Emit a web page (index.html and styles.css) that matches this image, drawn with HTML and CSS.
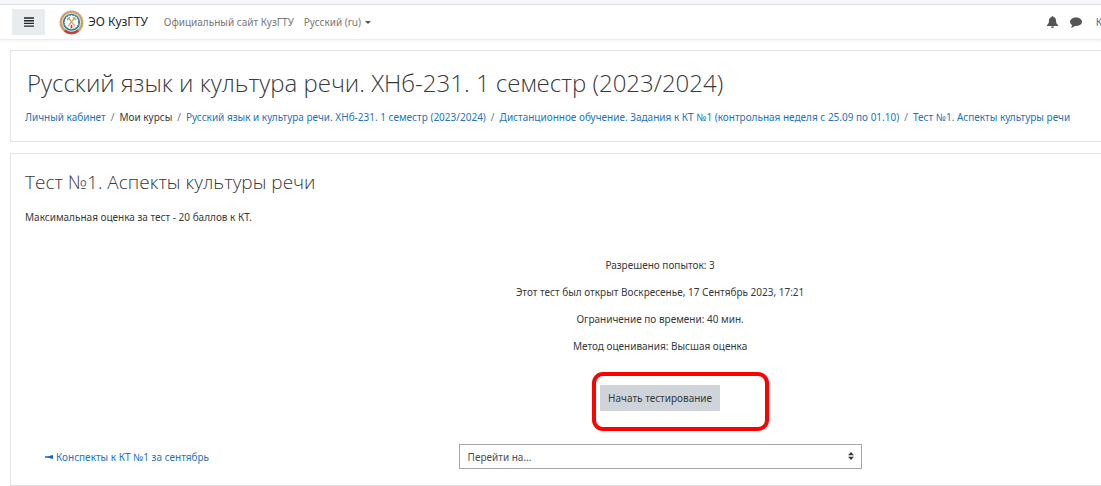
FILE: index.html
```html
<!DOCTYPE html>
<html lang="ru">
<head>
<meta charset="utf-8">
<meta name="viewport" content="width=device-width, initial-scale=1">
<title>Тест №1. Аспекты культуры речи</title>
<link rel="stylesheet" href="styles.css">
</head>
<body>
<header class="navbar">
  <button class="menu-button" type="button" aria-label="Меню">
    <svg width="10" height="10" viewBox="0 0 10 10" aria-hidden="true"><path d="M0 1h10M0 3.7h10M0 6.4h10M0 9.1h10" stroke="#212529" stroke-width="1.4"/></svg>
  </button>
  <a class="brand" href="#">
    <svg width="25" height="25" viewBox="0 0 25 25" aria-hidden="true">
      <circle cx="12.5" cy="12.5" r="12" fill="#d2ad79"/>
      <circle cx="12.5" cy="12.5" r="10.6" fill="none" stroke="#b98b5c" stroke-width="1" stroke-dasharray="1.5 1.5"/>
      <path d="M5 21.5a12 12 0 0 0 15 0l-1.5-2a10 10 0 0 1-12 0z" fill="#c63b35"/>
      <circle cx="12.5" cy="12.2" r="9.2" fill="#f6efe2"/>
      <circle cx="12.5" cy="12.2" r="7.9" fill="#fff" stroke="#267b99" stroke-width="1.3"/>
      <circle cx="12.5" cy="12.2" r="7" fill="none" stroke="#267b99" stroke-width="1" stroke-dasharray="1.4 1.4"/>
      <path d="M9 16.3l6-7.8M16 16.3L10 8.5" stroke="#d0a26c" stroke-width="1.3"/>
      <path d="M8 10l2.8-2.8M14.2 7.2L17 10" stroke="#d0a26c" stroke-width="1.8"/>
      <path d="M12.5 14.5c1.5 1.8 1.2 3.8 0 3.8s-1.5-2 0-3.8z" fill="#d5342f"/>
    </svg>
    <span>ЭО КузГТУ</span>
  </a>
  <nav class="nav-links">
    <a href="#">Официальный сайт КузГТУ</a>
    <a class="language" href="#">Русский (ru)
      <svg width="6" height="3" viewBox="0 0 6 3" aria-hidden="true"><path d="M0 0h6L3 3z" fill="#555"/></svg>
    </a>
  </nav>
  <div class="user-tools">
    <button class="icon-button" type="button" aria-label="Уведомления">
      <svg width="11" height="12" viewBox="0 0 11 12" aria-hidden="true"><path d="M5.5 0c.5 0 .8.3.8.9C8.2 1.3 9 2.7 9 4.5c0 2.3.7 3.6 2 4.5v1H0V9c1.3-.9 2-2.2 2-4.5C2 2.7 2.800 1.300 4.700.9c0-.6.3-.9.8-.9zM4 10.400h3c0 .9-.6 1.500-1.500 1.500S4 11.300 4 10.400z" fill="#555"/></svg>
    </button>
    <button class="icon-button" type="button" aria-label="Сообщения">
      <svg width="12" height="11" viewBox="0 0 12 11" aria-hidden="true"><path d="M6 .5c3.300 0 6 1.900 6 4.300S9.300 9 6 9c-.5 0-.9 0-1.300-.1C3.600 9.900 2.400 10.500.9 10.600c.7-.7 1.200-1.500 1.300-2.500C.8 7.300 0 6.100 0 4.800 0 2.400 2.700.5 6 .5z" fill="#555"/></svg>
    </button>
    <a class="user-name" href="#">К</a>
  </div>
</header>
<main class="page">
  <section class="card course-header">
    <h1>Русский язык и культура речи. ХНб-231. 1 семестр (2023/2024)</h1>
    <nav aria-label="Навигация">
      <ol class="breadcrumb">
        <li><a href="#">Личный кабинет</a></li>
        <li>Мои курсы</li>
        <li><a href="#">Русский язык и культура речи. ХНб-231. 1 семестр (2023/2024)</a></li>
        <li><a href="#">Дистанционное обучение. Задания к КТ №1 (контрольная неделя с 25.09 по 01.10)</a></li>
        <li><a href="#">Тест №1. Аспекты культуры речи</a></li>
      </ol>
    </nav>
  </section>
  <section class="card quiz">
    <h2>Тест №1. Аспекты культуры речи</h2>
    <p class="intro">Максимальная оценка за тест - 20 баллов к КТ.</p>
    <div class="quiz-info">
      <p>Разрешено попыток: 3</p>
      <p>Этот тест был открыт Воскресенье, 17 Сентябрь 2023, 17:21</p>
      <p>Ограничение по времени: 40 мин.</p>
      <p>Метод оценивания: Высшая оценка</p>
    </div>
    <div class="start">
      <button class="start-button" type="button">Начать тестирование</button>
      <span class="highlight"></span>
    </div>
    <div class="activity-nav">
      <a class="previous" href="#">
        <svg width="8" height="4" viewBox="0 0 8 4" aria-hidden="true"><path d="M0 1.200h3L8 0v4L3 2.800H0z" fill="#1469b5"/></svg>
        Конспекты к КТ №1 за сентябрь</a>
      <div class="jump">
        <select aria-label="Перейти на"><option>Перейти на...</option></select>
        <svg class="jump-arrows" width="6" height="8" viewBox="0 0 6 8" aria-hidden="true"><path d="M0 3.300L3 0l3 3.300zM0 4.700h6L3 8z" fill="#343a40"/></svg>
      </div>
    </div>
  </section>
</main>
</body>
</html>
```
FILE: styles.css
```css
* { box-sizing: border-box; }

body {
  margin: 0;
  overflow-x: hidden;
  background: #fff;
  color: #373a3c;
  font: 10px/16px "Noto Sans", "Open Sans", sans-serif;
}

a { color: #2474b8; text-decoration: none; }
h1, h2, p, ol { margin: 0; }
button, select { font: inherit; color: inherit; border-radius: 0; }

body::before {
  content: "";
  display: block;
  height: 4px;
  border-bottom: 1px solid #dcdde2;
  background: #f7f8fb;
}

.navbar {
  display: flex;
  align-items: center;
  height: 35px;
  padding-left: 12px;
  border-bottom: 1px solid #ececec;
  box-shadow: 0 1px 2px #f0f0f0;
  overflow: hidden;
}

.menu-button {
  display: grid;
  place-items: center;
  width: 33px;
  height: 26px;
  padding: 0;
  border: 0;
  background: #e9ecef;
}

.brand {
  display: flex;
  align-items: center;
  gap: 4px;
  margin-left: 14px;
  color: #25282b;
  font-size: 12px;
}

.nav-links {
  display: flex;
  gap: 10px;
  margin-left: 16px;
}

.nav-links a { color: #777; }
.language { display: flex; align-items: center; gap: 4px; }

.user-tools {
  display: flex;
  align-items: center;
  gap: 12px;
  margin-left: auto;
  margin-right: -1px;
}

.icon-button {
  display: flex;
  padding: 0;
  border: 0;
  background: none;
}

.user-name { margin-left: 2px; }

.page {
  display: grid;
  gap: 11px;
  width: 120%;
  padding: 10px 11px 0 10px;
}

.card { border: 1px solid #e3e3e3; padding: 14px; }

.course-header { padding-bottom: 16px; }

h1, h2 { font-family: "Open Sans", "Noto Sans", sans-serif; font-weight: 300; }
h1 { padding-left: 2px; font-size: 24px; line-height: 36px; }
h2 { font-size: 19px; line-height: 28px; }

.breadcrumb {
  display: flex;
  margin-top: 8px;
  padding: 0;
  list-style: none;
  white-space: nowrap;
}

.breadcrumb li + li::before { content: "/"; padding: 0 5px; color: #777; }

.intro { margin-top: 13px; }

.quiz-info {
  display: grid;
  gap: 11px;
  margin-top: 32px;
  text-align: center;
}

.start {
  position: relative;
  width: 120px;
  margin: 31px auto 0;
}

.start-button {
  width: 100%;
  height: 26px;
  padding: 0;
  border: 0;
  background: #ced4da;
  white-space: nowrap;
}

.highlight {
  position: absolute;
  inset: -13px -49px -20px -8px;
  border: 4px solid #f00;
  border-radius: 11px;
  pointer-events: none;
}

.quiz { padding-bottom: 16px; }

.activity-nav {
  display: grid;
  grid-template-columns: 1fr 403px 1fr;
  align-items: center;
  margin-top: 33px;
}

.previous {
  display: flex;
  align-items: center;
  gap: 3px;
  padding-left: 20px;
}

.jump { position: relative; }

.jump select {
  display: block;
  width: 100%;
  height: 25px;
  padding: 0 20px 0 8px;
  border: 1px solid #a5a8ab;
  background: #fff;
  color: #495057;
  appearance: none;
}

.jump-arrows {
  position: absolute;
  top: 8px;
  right: 8px;
  pointer-events: none;
}
```
